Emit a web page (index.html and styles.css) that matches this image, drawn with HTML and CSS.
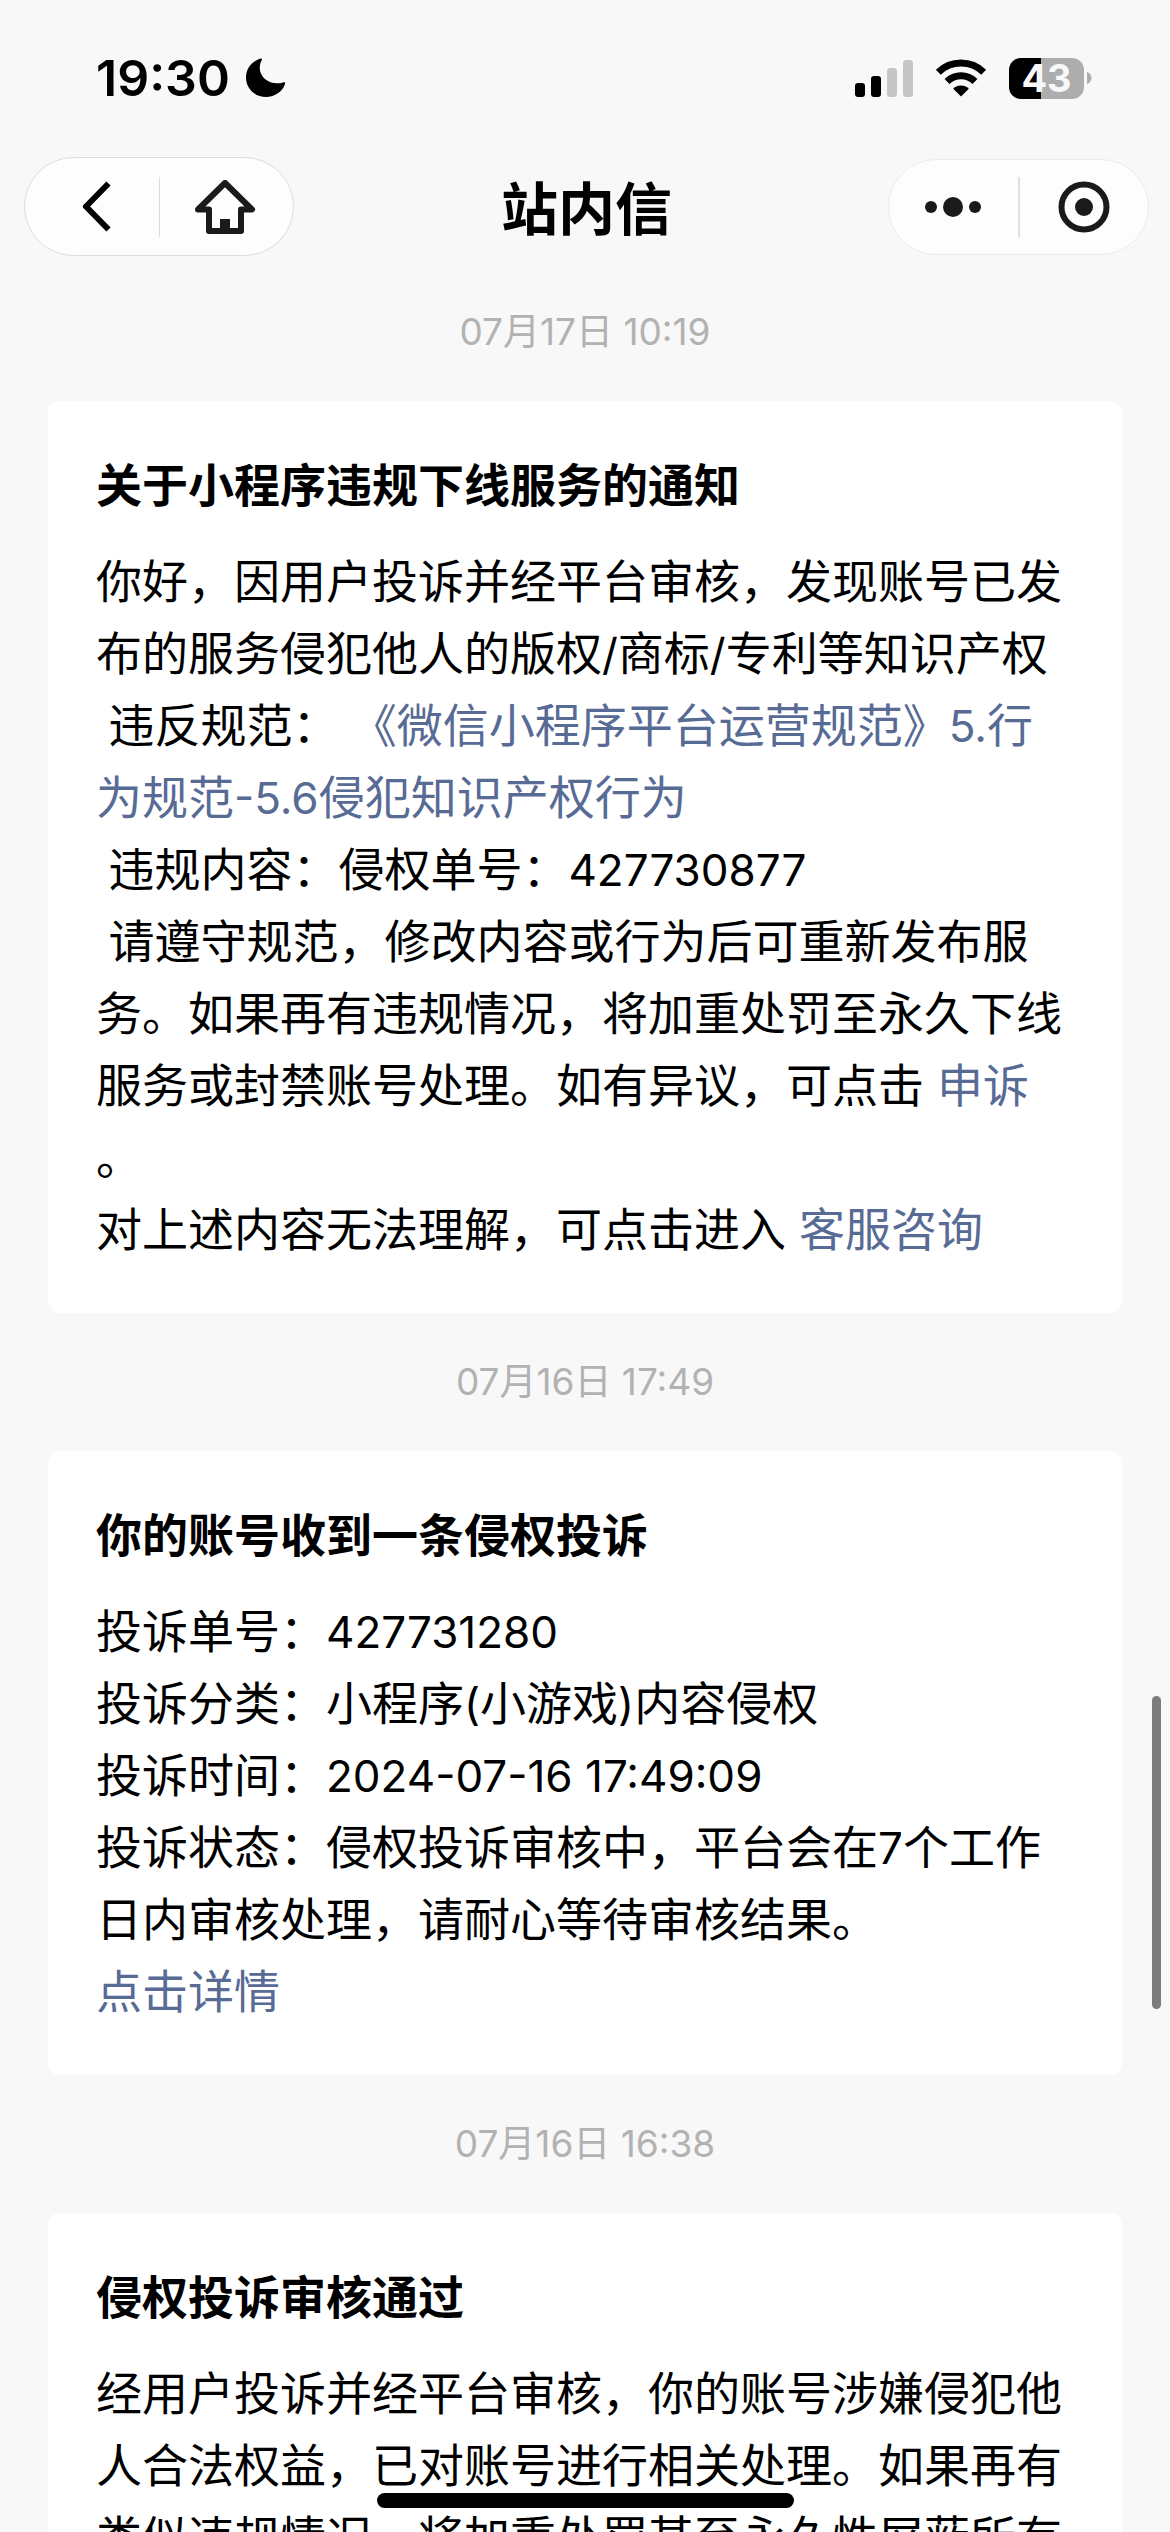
FILE: index.html
```html
<!DOCTYPE html>
<html lang="zh-CN">
<head>
  <meta charset="UTF-8">
  <meta name="viewport" content="width=device-width, initial-scale=1.0">
  <title>站内信</title>
  <link rel="stylesheet" href="styles.css">
</head>
<body>
  <div class="app">
    <div class="status-bar">
      <div class="status-left">
        <span class="time">19:30</span>
        <svg class="moon" viewBox="0 0 40 40" width="40" height="40">
          <path d="M15 0.500C6 3 0 10.500 0 19.500C0 30.500 9 39 20 39C29 39 36.500 33.500 39 26C39.500 24.500 38.500 24 37 24.500C25 28 13 20 13.800 9C14 6 14.800 4 15.800 1.800C16.200 0.700 15.800 0.300 15 0.500Z"/>
        </svg>
      </div>
      <div class="status-right">
        <svg viewBox="0 0 58 37" width="58" height="37">
          <rect x="0" y="23" width="10" height="14" rx="3"/>
          <rect x="16" y="16" width="10" height="21" rx="3"/>
          <rect x="32" y="8" width="10" height="29" rx="3" fill="#c6c6c6"/>
          <rect x="48" y="0" width="10" height="37" rx="3" fill="#c6c6c6"/>
        </svg>
        <svg viewBox="0 0 52 38" width="52" height="38">
          <path d="M3.300 13.300A32.500 32.500 0 0 1 48.700 13.300" fill="none" stroke="#000" stroke-width="7"/>
          <path d="M12 22.500A20 20 0 0 1 40 22.500" fill="none" stroke="#000" stroke-width="7"/>
          <path d="M26 37.500L18.200 29.700A11 11 0 0 1 33.800 29.700Z"/>
        </svg>
        <div class="battery">
          <span class="battery-level">43</span>
          <svg viewBox="0 0 5 12" width="5" height="12"><path d="M0 0C6 2 6 10 0 12Z" fill="#adadad"/></svg>
        </div>
      </div>
    </div>

    <header class="nav">
      <div class="capsule capsule-left">
        <button type="button" aria-label="返回">
          <svg viewBox="-10 0 40 52" width="40" height="52">
            <path d="M26.500 2.500L4 25.500L26.500 48.500" fill="none" stroke="#000" stroke-width="6" stroke-linejoin="round"/>
          </svg>
        </button>
        <button type="button" aria-label="首页">
          <svg viewBox="0 0 62 54" width="62" height="54">
            <path d="M30 3L57 29.500H46V51H14V29.500H3Z" fill="none" stroke="#1a1a1a" stroke-width="6" stroke-linejoin="round"/>
            <rect x="25" y="39" width="10" height="12" fill="#1a1a1a"/>
          </svg>
        </button>
      </div>
      <h1>站内信</h1>
      <div class="capsule capsule-right">
        <button type="button" aria-label="更多">
          <svg viewBox="0 0 56 20" width="56" height="20">
            <circle cx="6" cy="10" r="6" fill="#1a1a1a"/>
            <circle cx="28" cy="10" r="10" fill="#1a1a1a"/>
            <circle cx="50" cy="10" r="6" fill="#1a1a1a"/>
          </svg>
        </button>
        <button type="button" aria-label="关闭">
          <svg viewBox="0 0 52 52" width="52" height="52">
            <circle cx="26" cy="26" r="22.500" fill="none" stroke="#1a1a1a" stroke-width="6"/>
            <circle cx="26" cy="26" r="9" fill="#1a1a1a"/>
          </svg>
        </button>
      </div>
    </header>

    <main class="messages">
      <time class="date">07月17日 10:19</time>
      <article class="card">
        <h2>关于小程序违规下线服务的通知</h2>
        <p>你好，因用户投诉并经平台审核，发现账号已发布的服务侵犯他人的版权<span class="latin">/</span>商标<span class="latin">/</span>专利等知识产权
<span class="latin"> </span>违反规范：<span class="latin"> </span><a href="#">《微信小程序平台运营规范》<span class="latin">5.</span>行为规范<span class="latin">-5.6</span>侵犯知识产权行为</a>
<span class="latin"> </span>违规内容：侵权单号：<span class="latin">427730877</span>
<span class="latin"> </span>请遵守规范，修改内容或行为后可重新发布服务。如果再有违规情况，将加重处罚至永久下线服务或封禁账号处理。如有异议，可点击 <a href="#">申诉</a>
。
对上述内容无法理解，可点击进入 <a href="#">客服咨询</a></p>
      </article>

      <time class="date">07月16日 17:49</time>
      <article class="card">
        <h2>你的账号收到一条侵权投诉</h2>
        <p>投诉单号：<span class="latin">427731280</span>
投诉分类：小程序<span class="latin">(</span>小游戏<span class="latin">)</span>内容侵权
投诉时间：<span class="latin">2024-07-16 17:49:09</span>
投诉状态：侵权投诉审核中，平台会在<span class="latin">7</span>个工作日内审核处理，请耐心等待审核结果。
<a href="#">点击详情</a></p>
      </article>

      <time class="date">07月16日 16:38</time>
      <article class="card">
        <h2>侵权投诉审核通过</h2>
        <p>经用户投诉并经平台审核，你的账号涉嫌侵犯他人合法权益，已对账号进行相关处理。如果再有类似违规情况，将加重处罚甚至永久性屏蔽所有</p>
      </article>
    </main>

    <div class="scroll-thumb"></div>
    <div class="home-indicator"></div>
  </div>
</body>
</html>
```
FILE: styles.css
```css
* {
  box-sizing: border-box;
}

body {
  margin: 0;
  background-color: #f8f8f8;
  color: #000;
  font-family: Inter, "Noto Sans CJK SC", sans-serif;
}

.app {
  position: relative;
  display: flex;
  flex-direction: column;
  height: 100vh;
  overflow: hidden;
}

/* status bar */
.status-bar {
  display: flex;
  justify-content: space-between;
  align-items: center;
  flex-shrink: 0;
  height: 150px;
  padding: 6px 78px 0 96px;
}

.status-left,
.status-right,
.battery {
  display: flex;
  align-items: center;
}

.status-left {
  gap: 16px;
}

.status-right {
  gap: 22px;
}

.time {
  font-size: 50px;
  font-weight: 600;
  line-height: 60px;
}

.battery {
  gap: 3px;
}

.battery-level {
  width: 75px;
  border-radius: 12px;
  background: linear-gradient(to right, #000 43%, #adadad 43%);
  color: #f8f8f8;
  font-size: 38px;
  font-weight: 700;
  line-height: 41px;
  text-align: center;
}

/* navigation */
.nav {
  display: grid;
  grid-template-columns: 1fr auto 1fr;
  align-items: center;
  flex-shrink: 0;
  height: 113px;
  padding: 0 21px 0 24px;
}

.nav h1 {
  margin: 0;
  padding-top: 6px;
  font-size: 57px;
  font-weight: 700;
  line-height: 72px;
}

.capsule {
  display: flex;
  align-items: center;
  border-radius: 50px;
  background-color: #fdfdfd;
}

.capsule button {
  display: flex;
  flex: 1;
  justify-content: center;
  align-items: center;
  height: 60px;
  padding: 0;
  border: none;
  background: none;
  cursor: pointer;
}

.capsule-left {
  width: 270px;
  height: 99px;
  border: 1px solid #dcdcdc;
}

.capsule-left button + button {
  border-left: 1px solid #dcdcdc;
}

.capsule-right {
  justify-self: end;
  width: 261px;
  height: 96px;
  border: 1px solid #ebebeb;
}

.capsule-right button + button {
  border-left: 2px solid #e0e0e0;
}

/* messages */
.messages {
  flex: 1;
  min-height: 0;
  padding: 0 48px;
  overflow: hidden;
}

.date {
  display: block;
  padding: 48px 0;
  color: #b2b2b2;
  font-size: 37px;
  line-height: 42px;
  text-align: center;
}

.card {
  padding: 48px;
  border-radius: 12px;
  background-color: #fff;
}

.card h2 {
  margin: 0 0 24px;
  font-size: 46px;
  font-weight: 700;
  line-height: 72px;
}

.card p {
  margin: 0;
  font-size: 46px;
  line-height: 72px;
  white-space: pre-wrap;
}

.card a {
  color: #576b95;
  text-decoration: none;
}

/* digits and latin marks run a little smaller than the chinese text */
.latin {
  font-size: 44px;
  line-height: 1;
}

/* overlays */
.scroll-thumb {
  position: absolute;
  top: 67%;
  right: 9px;
  width: 9px;
  height: 313px;
  border-radius: 5px;
  background-color: #7c7c7c;
}

.home-indicator {
  position: absolute;
  bottom: 24px;
  left: 50%;
  width: 417px;
  height: 15px;
  margin-left: -208px;
  border-radius: 8px;
  background-color: #000;
}
```
